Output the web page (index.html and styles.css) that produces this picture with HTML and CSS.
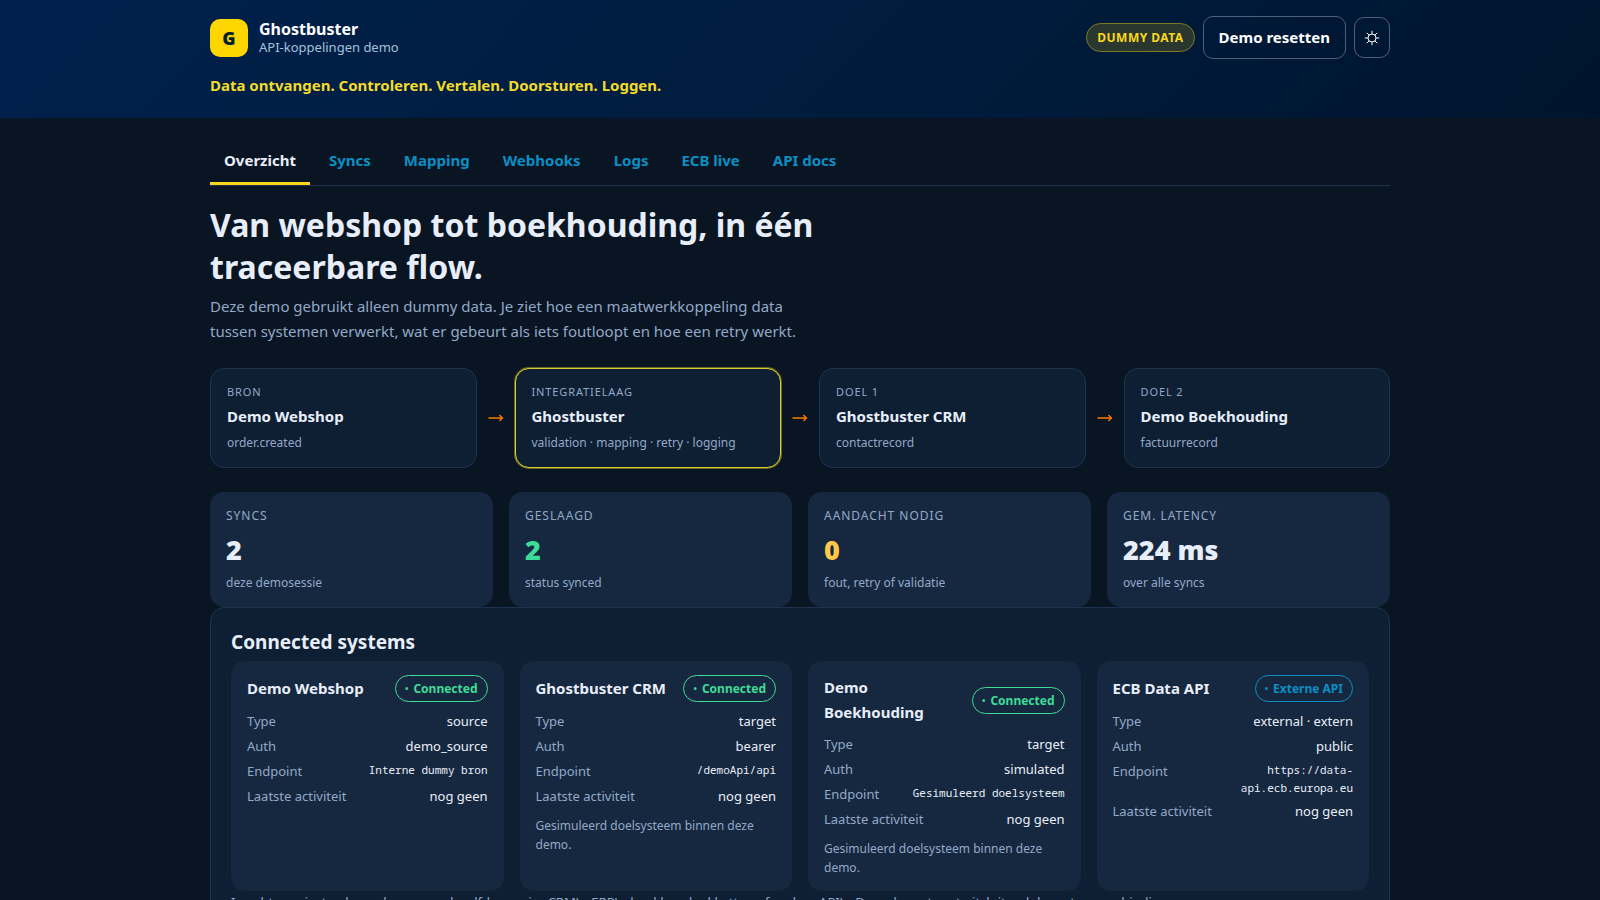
FILE: index.html
```html
<!DOCTYPE html>
<html lang="nl">
<head>
    <meta charset="UTF-8">
    <meta name="viewport" content="width=device-width, initial-scale=1.0">
    <title>Ghostbuster | API-koppelingen demo</title>
    <link rel="stylesheet" href="styles.css">
</head>
<body>
    <header class="site-header">
        <div class="container">
            <div class="header-row">
                <div class="brand">
                    <span class="brand-mark">G</span>
                    <div class="brand-text">
                        <strong>Ghostbuster</strong>
                        <span>API-koppelingen demo</span>
                    </div>
                </div>
                <div class="header-actions">
                    <span class="demo-badge">Dummy data</span>
                    <button type="button" class="reset-button">Demo resetten</button>
                    <button type="button" class="theme-button" aria-label="Wissel thema">
                        <svg viewBox="0 0 16 16" width="16" height="16" fill="none" stroke="currentColor">
                            <circle cx="8" cy="8" r="4"/>
                            <path d="M8 4V.8M8 12v3.2M4 8H.8M12 8h3.2M5.2 5.2L2.9 2.9M10.8 5.2l2.3-2.3M5.2 10.8l-2.3 2.3M10.8 10.8l2.3 2.3"/>
                        </svg>
                    </button>
                </div>
            </div>
            <p class="tagline">Data ontvangen. Controleren. Vertalen. Doorsturen. Loggen.</p>
        </div>
    </header>

    <main class="container">
        <nav class="tabs">
            <a href="#overzicht" class="active">Overzicht</a>
            <a href="#syncs">Syncs</a>
            <a href="#mapping">Mapping</a>
            <a href="#webhooks">Webhooks</a>
            <a href="#logs">Logs</a>
            <a href="#ecb">ECB live</a>
            <a href="#docs">API docs</a>
        </nav>

        <section class="intro" id="overzicht">
            <h1>Van webshop tot boekhouding, in één traceerbare flow.</h1>
            <p>Deze demo gebruikt alleen dummy data. Je ziet hoe een maatwerkkoppeling data tussen systemen verwerkt, wat er gebeurt als iets foutloopt en hoe een retry werkt.</p>
        </section>

        <section class="flow">
            <div class="flow-node">
                <span class="label">Bron</span>
                <strong>Demo Webshop</strong>
                <small>order.created</small>
            </div>
            <svg class="flow-arrow" viewBox="0 0 16 8" width="16" height="8"><path d="M.5 4h14M11.5 1l3 3-3 3"/></svg>
            <div class="flow-node highlight">
                <span class="label">Integratielaag</span>
                <strong>Ghostbuster</strong>
                <small>validation · mapping · retry · logging</small>
            </div>
            <svg class="flow-arrow" viewBox="0 0 16 8" width="16" height="8"><path d="M.5 4h14M11.5 1l3 3-3 3"/></svg>
            <div class="flow-node">
                <span class="label">Doel 1</span>
                <strong>Ghostbuster CRM</strong>
                <small>contactrecord</small>
            </div>
            <svg class="flow-arrow" viewBox="0 0 16 8" width="16" height="8"><path d="M.5 4h14M11.5 1l3 3-3 3"/></svg>
            <div class="flow-node">
                <span class="label">Doel 2</span>
                <strong>Demo Boekhouding</strong>
                <small>factuurrecord</small>
            </div>
        </section>

        <section class="stats">
            <div class="stat">
                <span class="label">Syncs</span>
                <strong>2</strong>
                <small>deze demosessie</small>
            </div>
            <div class="stat">
                <span class="label">Geslaagd</span>
                <strong class="ok">2</strong>
                <small>status synced</small>
            </div>
            <div class="stat">
                <span class="label">Aandacht nodig</span>
                <strong class="warn">0</strong>
                <small>fout, retry of validatie</small>
            </div>
            <div class="stat">
                <span class="label">Gem. latency</span>
                <strong>224 ms</strong>
                <small>over alle syncs</small>
            </div>
        </section>

        <section class="panel">
            <h2>Connected systems</h2>
            <div class="systems">
                <article class="system">
                    <div class="system-head">
                        <h3>Demo Webshop</h3>
                        <span class="status">Connected</span>
                    </div>
                    <dl>
                        <div><dt>Type</dt><dd>source</dd></div>
                        <div><dt>Auth</dt><dd>demo_source</dd></div>
                        <div><dt>Endpoint</dt><dd><code>Interne dummy bron</code></dd></div>
                        <div><dt>Laatste activiteit</dt><dd>nog geen</dd></div>
                    </dl>
                </article>
                <article class="system">
                    <div class="system-head">
                        <h3>Ghostbuster CRM</h3>
                        <span class="status">Connected</span>
                    </div>
                    <dl>
                        <div><dt>Type</dt><dd>target</dd></div>
                        <div><dt>Auth</dt><dd>bearer</dd></div>
                        <div><dt>Endpoint</dt><dd><code>/demoApi/api</code></dd></div>
                        <div><dt>Laatste activiteit</dt><dd>nog geen</dd></div>
                    </dl>
                    <p>Gesimuleerd doelsysteem binnen deze demo.</p>
                </article>
                <article class="system">
                    <div class="system-head">
                        <h3>Demo Boekhouding</h3>
                        <span class="status">Connected</span>
                    </div>
                    <dl>
                        <div><dt>Type</dt><dd>target</dd></div>
                        <div><dt>Auth</dt><dd>simulated</dd></div>
                        <div><dt>Endpoint</dt><dd><code>Gesimuleerd doelsysteem</code></dd></div>
                        <div><dt>Laatste activiteit</dt><dd>nog geen</dd></div>
                    </dl>
                    <p>Gesimuleerd doelsysteem binnen deze demo.</p>
                </article>
                <article class="system">
                    <div class="system-head">
                        <h3>ECB Data API</h3>
                        <span class="status external">Externe API</span>
                    </div>
                    <dl>
                        <div><dt>Type</dt><dd>external · extern</dd></div>
                        <div><dt>Auth</dt><dd>public</dd></div>
                        <div><dt>Endpoint</dt><dd><code>https://data-api.ecb.europa.eu</code></dd></div>
                        <div><dt>Laatste activiteit</dt><dd>nog geen</dd></div>
                    </dl>
                </article>
            </div>
            <p class="panel-note">In echte projecten koppelen we op dezelfde manier CRM's, ERP's, boekhoudpakketten of andere API's. Deze demo toont uitsluitend de systeemverbinding.</p>
        </section>
    </main>
</body>
</html>
```

FILE: styles.css
```css
* {
    box-sizing: border-box;
}

body {
    margin: 0;
    background: #091522;
    color: #e8eef9;
    font-family: "Noto Sans", sans-serif;
    font-size: 15px;
    line-height: 25px;
}

h1, h2, h3, p, dl, dd {
    margin: 0;
}

.container {
    width: calc(100% - 40px);
    max-width: 1180px;
    margin: 0 auto;
}

/* Header */
.site-header {
    padding: 16px 0 20px;
    background: linear-gradient(135deg, #00214d 0%, #001c3d 55%, #00142e 100%);
}

.header-row {
    display: flex;
    justify-content: space-between;
    align-items: center;
}

.brand {
    display: flex;
    align-items: center;
    gap: 11px;
}

.brand-mark {
    width: 38px;
    height: 38px;
    border-radius: 10px;
    background: #ffd600;
    color: #00212b;
    font-size: 18px;
    font-weight: 900;
    line-height: 38px;
    text-align: center;
}

.brand-text {
    display: flex;
    flex-direction: column;
    line-height: 18px;
}

.brand-text strong {
    color: #fff;
    font-size: 16px;
}

.brand-text span {
    color: #a9c0dc;
    font-size: 13px;
}

.header-actions {
    display: flex;
    align-items: center;
    gap: 8px;
}

.demo-badge {
    padding: 4px 10px;
    border: 1px solid #7d7a24;
    border-radius: 999px;
    background: #29372f;
    color: #f9d71c;
    font-size: 12px;
    font-weight: 700;
    line-height: 19px;
    letter-spacing: 0.04em;
    text-transform: uppercase;
}

button {
    border: 1px solid #4d6079;
    border-radius: 10px;
    background: transparent;
    color: #fff;
    font-family: inherit;
    cursor: pointer;
}

.reset-button {
    padding: 8px 15px;
    font-size: 15px;
    font-weight: 700;
    line-height: 25px;
}

.theme-button {
    display: flex;
    align-items: center;
    justify-content: center;
    width: 36px;
    height: 41px;
    padding: 0;
}

.tagline {
    margin-top: 14px;
    color: #f3da2b;
    font-weight: 700;
}

/* Tabs */
.tabs {
    display: flex;
    gap: 5px;
    margin-top: 24px;
    border-bottom: 1px solid #1f3049;
}

.tabs a {
    padding: 6px 14px 9px;
    border-bottom: 3px solid transparent;
    color: #0b8fc4;
    font-weight: 700;
    text-decoration: none;
}

.tabs a.active {
    border-bottom-color: #f9d71c;
    color: #e8eef9;
}

/* Intro */
.intro {
    max-width: 620px;
    margin-top: 18px;
}

.intro h1 {
    font-size: 32px;
    line-height: 42px;
}

.intro p {
    margin-top: 6px;
    color: #93a8c8;
}

.label {
    display: block;
    color: #93a8c8;
    font-size: 12px;
    letter-spacing: 0.08em;
    text-transform: uppercase;
}

small {
    display: block;
    color: #93a8c8;
    font-size: 12px;
}

/* Flow */
.flow {
    display: grid;
    grid-template-columns: 1fr 38px 1fr 38px 1fr 38px 1fr;
    align-items: center;
    margin-top: 24px;
}

.flow-node {
    padding: 13px 16px 12px;
    border: 1px solid #1e3350;
    border-radius: 14px;
    background: #0e1f33;
}

.flow-node.highlight {
    border-color: #e0cb30;
    box-shadow: 0 0 0 1px #6b6620;
}

.flow-node .label {
    font-size: 11px;
    line-height: 19px;
}

.flow-node strong {
    display: block;
    margin: 3px 0 1px;
}

.flow-arrow {
    justify-self: center;
    fill: none;
    stroke: #ff7a00;
    stroke-width: 1.3;
}

/* Stats */
.stats {
    display: grid;
    grid-template-columns: repeat(4, 1fr);
    gap: 16px;
    margin-top: 24px;
}

.stat {
    padding: 14px 16px;
    border-radius: 14px;
    background: #16283f;
}

.stat .label {
    line-height: 20px;
}

.stat strong {
    display: block;
    margin: 6px 0 5px;
    font-size: 27px;
    font-weight: 900;
    line-height: 36px;
}

.stat small {
    line-height: 20px;
}

.ok {
    color: #3ddc97;
}

.warn {
    color: #ffc84a;
}

/* Connected systems */
.panel {
    padding: 20px;
    border: 1px solid #1e3350;
    border-radius: 14px;
    background: #0e1f33;
}

.panel h2 {
    font-size: 19px;
    line-height: 28px;
}

.systems {
    display: grid;
    grid-template-columns: repeat(4, 1fr);
    gap: 16px;
    margin-top: 5px;
}

.system {
    padding: 14px 16px;
    border-radius: 14px;
    background: #16283f;
}

.system-head {
    display: flex;
    align-items: center;
    justify-content: space-between;
    gap: 8px;
    margin-bottom: 9px;
}

.system h3 {
    font-size: 15px;
}

.status {
    flex: none;
    padding: 3px 9px;
    border: 1px solid #3ddc97;
    border-radius: 999px;
    color: #3ddc97;
    font-size: 12px;
    font-weight: 700;
    line-height: 19px;
}

.status::before {
    content: "•";
    margin-right: 5px;
    font-size: 9px;
    vertical-align: 1px;
}

.status.external {
    border-color: #0b8fc4;
    color: #0b8fc4;
}

.system dl {
    display: flex;
    flex-direction: column;
    gap: 4px;
    font-size: 13px;
    line-height: 21px;
}

.system dl div {
    display: flex;
    justify-content: space-between;
    gap: 12px;
}

.system dt {
    color: #93a8c8;
}

.system dd {
    text-align: right;
}

.system code {
    display: block;
    font-family: "Noto Sans Mono", "DejaVu Sans Mono", monospace;
    font-size: 11px;
    line-height: 18px;
}

.system p {
    margin-top: 9px;
    color: #93a8c8;
    font-size: 12px;
    line-height: 19px;
}

.panel-note {
    color: #93a8c8;
    font-size: 13px;
    line-height: 23px;
}
```
